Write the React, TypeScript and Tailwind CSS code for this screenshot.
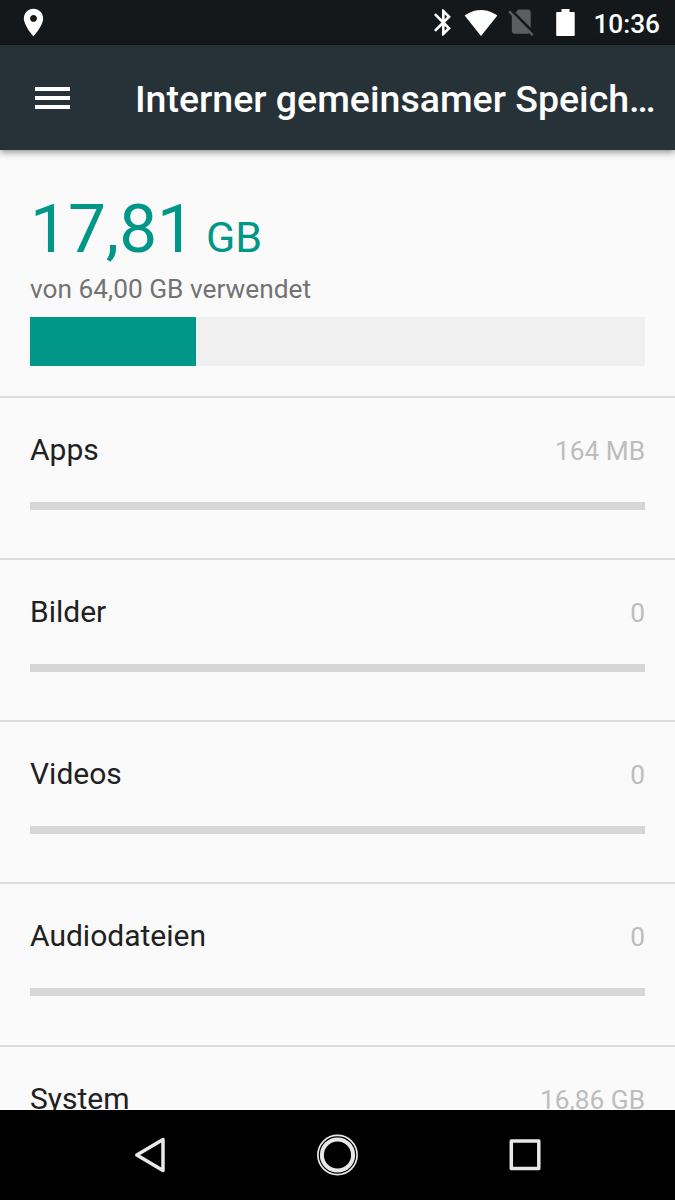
import { JSX } from "react";

// Interface for a storage category
interface StorageItem {
  label: string;
  value: string;
}

const storageItems: StorageItem[] = [
  { label: "Apps", value: "164 MB" },
  { label: "Bilder", value: "0" },
  { label: "Videos", value: "0" },
  { label: "Audiodateien", value: "0" },
  { label: "System", value: "16,86 GB" },
];

function StatusBar(): JSX.Element {
  return (
    <div className="flex h-[45px] shrink-0 items-center bg-[#14181b] pr-[15px] pl-[17px] text-white">
      <svg className="h-[33px] w-[33px]" viewBox="0 0 24 24" fill="currentColor">
        <path d="M12 2C8.13 2 5 5.13 5 9c0 5.25 7 13 7 13s7-7.75 7-13c0-3.87-3.13-7-7-7zm0 9.5c-1.38 0-2.5-1.12-2.5-2.5s1.12-2.5 2.5-2.5 2.5 1.12 2.5 2.5-1.12 2.5-2.5 2.5z" />
      </svg>
      <div className="ml-auto flex items-center">
        {/* Bluetooth */}
        <svg className="h-[27px] w-[17px]" viewBox="5 2 12.8 20" fill="currentColor">
          <path d="M17.71 7.71L12 2h-1v7.59L6.41 5 5 6.41 10.59 12 5 17.59 6.41 19 11 14.41V22h1l5.71-5.71-4.3-4.29 4.3-4.29zM13 5.83l1.88 1.88L13 9.59V5.83zm1.88 10.46L13 18.17v-3.76l1.88 1.88z" />
        </svg>
        {/* Wifi */}
        <svg className="ml-[13px] h-[26px] w-[34px]" viewBox="0 3 24 18.5" fill="currentColor">
          <path d="M12.01 21.49L23.64 7c-.45-.34-4.93-4-11.64-4C5.28 3 .81 6.66.36 7l11.63 14.49.01.01.01-.01z" />
        </svg>
        {/* No SIM */}
        <svg className="ml-[10px] h-[27px] w-[26px] text-[#5b5d5f]" viewBox="2.3 2.7 19 20" fill="currentColor">
          <path d="M18.99 5c0-1.1-.89-2-1.99-2h-7L7.66 5.34 19 16.68 18.99 5zM3.65 3.88L2.38 5.15 5 7.77V19c0 1.1.9 2 2 2h10.01c.35 0 .67-.1.96-.26l1.88 1.88 1.27-1.27L3.65 3.88z" />
        </svg>
        {/* Battery */}
        <svg className="ml-[22px] h-[27px] w-[19px]" viewBox="0 0 19 27" fill="currentColor">
          <path d="M5.5 0h8v3H18q.7 0 .7.7V26.3q0 .7-.7.7H.9q-.7 0-.7-.7V3.7q0-.7.7-.7h4.6z" />
        </svg>
        <span className="mt-[3px] ml-[18px] text-[26.25px] leading-none font-medium">10:36</span>
      </div>
    </div>
  );
}

function AppBar(): JSX.Element {
  return (
    <header className="z-10 flex h-[105px] shrink-0 items-center bg-[#273238] pr-[15px] pl-[35px] text-white shadow-[0_2px_7px_rgba(0,0,0,0.45)]">
      <button className="flex w-[35px] shrink-0 flex-col gap-[5px]">
        <span className="h-1 w-full bg-white"></span>
        <span className="h-1 w-full bg-white"></span>
        <span className="h-1 w-full bg-white"></span>
      </button>
      <h1 className="ml-[65px] min-w-0 flex-1 truncate pt-[2px] text-[37.5px] leading-[48px] font-medium">
        Interner gemeinsamer Speich…
      </h1>
    </header>
  );
}

function Summary(): JSX.Element {
  return (
    <section className="h-[246px] shrink-0 px-[30px] pt-[39px]">
      <div className="flex h-[82px] items-baseline text-[#009688]">
        <span className="text-[67.5px] leading-[80px]">17,81</span>
        <span className="ml-[11px] text-[43px] leading-none">GB</span>
      </div>
      <p className="h-[46px] text-[26.25px] leading-[36px] text-[#737373]">von 64,00 GB verwendet</p>
      <div className="h-[49px] bg-[#f0f0f0]">
        <div className="h-full w-[27%] bg-[#009688]"></div>
      </div>
    </section>
  );
}

function StorageRow({ label, value }: StorageItem): JSX.Element {
  return (
    <li className="h-[162.15px] shrink-0 border-t-2 border-[#dcdcdc] px-[30px] pt-[32px]">
      <div className="flex h-[72px] items-baseline justify-between">
        <span className="text-[30px] leading-[40px] text-[#212121]">{label}</span>
        <span className="text-[26.25px] leading-[36px] text-[#bdbdbd]">{value}</span>
      </div>
      <div className="h-[7.5px] bg-[#d6d6d6]"></div>
    </li>
  );
}

function NavBar(): JSX.Element {
  return (
    <nav className="flex h-[90px] shrink-0 items-center justify-center gap-[145px] bg-black">
      <svg className="h-[42px] w-[42px]" viewBox="0 0 42 42" fill="none" stroke="#e8e8e8">
        <path d="M33 5.5v31L6.8 21z" strokeWidth="3.5" strokeLinejoin="round" />
      </svg>
      <svg className="h-[42px] w-[42px]" viewBox="0 0 42 42" fill="none" stroke="#e8e8e8">
        <circle cx="20.5" cy="21" r="19.6" strokeWidth="1.7" />
        <circle cx="20.5" cy="21" r="15.6" strokeWidth="4" />
      </svg>
      <svg className="h-[42px] w-[42px]" viewBox="0 0 42 42" fill="none" stroke="#e8e8e8">
        <rect x="7.3" y="7" width="27.5" height="27.5" strokeWidth="3.5" strokeLinejoin="round" />
      </svg>
    </nav>
  );
}

export default function App(): JSX.Element {
  return (
    <div className="flex h-[1200px] w-[675px] flex-col overflow-hidden bg-[#fafafa] font-[Roboto,sans-serif]">
      <StatusBar />
      <AppBar />
      <main className="flex min-h-0 flex-1 flex-col overflow-hidden">
        <Summary />
        <ul className="flex flex-col">
          {storageItems.map((item) => (
            <StorageRow key={item.label} label={item.label} value={item.value} />
          ))}
        </ul>
      </main>
      <NavBar />
    </div>
  );
}
